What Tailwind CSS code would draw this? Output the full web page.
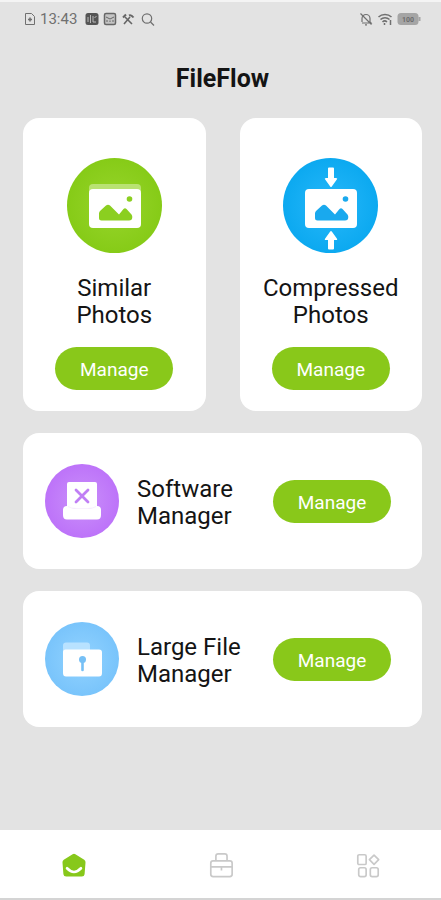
<!DOCTYPE html>
<html lang="en">
<head>
<meta charset="utf-8">
<meta name="viewport" content="width=device-width, initial-scale=1">
<title>FileFlow</title>
<script src="https://cdn.jsdelivr.net/npm/@tailwindcss/browser@4"></script>
</head>
<body class="flex min-h-screen flex-col border-t-2 border-[#f4f4f4] bg-[#e3e3e3] font-[Roboto,sans-serif] text-[#141414]">

<!-- Status bar -->
<div class="flex h-[34px] items-center justify-between pl-6 pr-5 text-[#707070]">
  <div class="flex items-center gap-1">
    <svg class="h-3.5 w-3" viewBox="0 0 12 14" fill="none" stroke="currentColor" stroke-width="1"><path d="M1.500 1.500h6l3 3v8h-9z"/><path d="M6 5.500v4M4 7.500h4" stroke-width="1.600"/></svg>
    <span class="text-[15px] leading-5">13:43</span>
    <svg class="ml-1 h-3.5 w-3.5" viewBox="0 0 14 14"><rect x="0.500" y="1" width="13" height="12" rx="2.500" fill="#555"/><path d="M3 5v5M5.500 3v8M8 4v6h3M9.500 5.500l2-1" stroke="#bbb" fill="none"/></svg>
    <svg class="h-3.5 w-3.5" viewBox="0 0 14 14"><rect x="1.500" y="1.500" width="11" height="11" rx="1.500" fill="#c4c4c4" stroke="#666" stroke-width="1.500"/><path d="M3 5l4 2 4-2M4 10V8m3 2V8.500M10 10V8" stroke="#666" fill="none"/></svg>
    <svg class="h-3.5 w-3.5" viewBox="0 0 14 14" fill="none" stroke="#666"><path d="M3 12l6-7M4 5l7 7" stroke-width="1.600"/><path d="M2 5.500l3-3M8 3.500c2-1 3 0 4.500 2" stroke-width="2"/></svg>
    <svg class="ml-0.5 h-3.5 w-3.5" viewBox="0 0 14 14" fill="none" stroke="currentColor" stroke-width="1.200"><circle cx="6" cy="6.500" r="4.700"/><path d="M9.500 10l3.500 3.500"/></svg>
  </div>
  <div class="flex items-center gap-1">
    <svg class="h-3.5 w-3.5" viewBox="0 0 14 14" fill="none" stroke="currentColor" stroke-width="1.200"><path d="M3 10V6.500a4 4 0 0 1 8 0V10l1 1H3M6 12.800h2M1.500 1.500l11 11"/></svg>
    <svg class="h-3.5 w-4" viewBox="0 0 16 14" fill="none" stroke="currentColor" stroke-width="1.500"><path d="M1.500 5c3.500-3.500 9.500-3.500 13 0M3.500 7.500c2.500-2.500 6.500-2.500 9 0M5.500 10c1.500-1.500 3-1.500 4.500 0"/><path d="M13.500 8v5M7.500 11v2"/></svg>
    <svg class="h-3.5 w-6" viewBox="0 0 24 14"><rect x="0.500" y="1" width="21" height="12" rx="3.500" fill="#a5a5a5"/><path d="M22.500 5v4" stroke="#a5a5a5" stroke-width="2"/><text x="11" y="10" text-anchor="middle" font-size="7" font-weight="700" fill="#6c6c6c">100</text></svg>
  </div>
</div>

<h1 class="mt-[25px] pr-[19px] pl-[23px] text-center text-[25px] leading-9 font-bold">FileFlow</h1>

<main class="mt-[21px] flex grow flex-col gap-[22px] pr-[19px] pl-[23px]">
  <div class="grid grid-cols-2 gap-[34px]">
    <section class="flex flex-col items-center rounded-2xl bg-white pt-10 pb-[21px]">
      <svg class="size-[95px]" viewBox="0 0 95 95">
        <defs><radialGradient id="green"><stop offset="0" stop-color="#98d52c"/><stop offset="1" stop-color="#86cb17"/></radialGradient></defs>
        <circle cx="47.500" cy="47.500" r="47.500" fill="url(#green)"/>
        <path d="M22 34v-4a4 4 0 0 1 4-4h44a4 4 0 0 1 4 4v4z" fill="#b9e273"/>
        <rect x="22" y="31" width="52" height="39" rx="4" fill="#fff"/>
        <path d="M32 55.500q0-1.500 1-2.500l6-5.500q2-1.500 4 0l9 9 4.500-5.500q1.500-1.500 3 0l5 5.500q.8 1 .8 2.500 0 3.500-3.300 3.500H34.500Q32 62.500 32 60z" fill="#8bcf20"/>
        <circle cx="62.500" cy="41" r="2.800" fill="#8bcf20"/>
      </svg>
      <h2 class="mt-[22px] text-center text-2xl leading-[27px]">Similar<br>Photos</h2>
      <button type="button" class="mt-[18px] h-[43px] w-[118px] rounded-full bg-[#89c81a] pt-1 text-[19px] text-white">Manage</button>
    </section>
    <section class="flex flex-col items-center rounded-2xl bg-white pt-10 pb-[21px]">
      <svg class="size-[95px]" viewBox="0 0 95 95">
        <defs><radialGradient id="blue"><stop offset="0" stop-color="#27b8fa"/><stop offset="1" stop-color="#0ca9f0"/></radialGradient></defs>
        <circle cx="47.500" cy="47.500" r="47.500" fill="url(#blue)"/>
        <rect x="22" y="31" width="52" height="39" rx="4" fill="#fff"/>
        <path d="M32 55.500q0-1.500 1-2.500l6-5.500q2-1.500 4 0l9 9 4.500-5.500q1.500-1.500 3 0l5 5.500q.8 1 .8 2.500 0 3.500-3.300 3.500H34.500Q32 62.500 32 60z" fill="#19a9ee"/>
        <circle cx="62.500" cy="41" r="2.800" fill="#19a9ee"/>
        <path d="M46 9.500h4q1 0 1 1V20h2q2 0 .8 1.500l-5 7q-.8 1-1.600 0l-5-7Q41 20 43 20h2v-9.500q0-1 1-1z" fill="#fff"/>
        <path d="M46 91.500h4q1 0 1-1V82h2q2 0 .8-1.500l-5-7q-.8-1-1.600 0l-5 7Q41 82 43 82h2v8.500q0 1 1 1z" fill="#fff"/>
      </svg>
      <h2 class="mt-[22px] text-center text-2xl leading-[27px]">Compressed<br>Photos</h2>
      <button type="button" class="mt-[18px] h-[43px] w-[118px] rounded-full bg-[#89c81a] pt-1 text-[19px] text-white">Manage</button>
    </section>
  </div>

  <section class="flex h-[136px] items-center rounded-2xl bg-white pr-[31px] pl-[22px]">
    <svg class="size-[74px] shrink-0" viewBox="0 0 74 74">
      <defs><radialGradient id="purple"><stop offset="0" stop-color="#ca90fa"/><stop offset="1" stop-color="#bd73f9"/></radialGradient></defs>
      <circle cx="37" cy="37" r="37" fill="url(#purple)"/>
      <path d="M22 44V20q0-2 2-2h26q2 0 2 2v24z" fill="#fff"/>
      <path d="M31 26l12 12M43 26L31 38" stroke="#c07ff5" stroke-width="2.800" stroke-linecap="round"/>
      <path d="M22 42h1q3 2.500 8 2.500h12q5 0 8-2.500h1q4 0 4 4v5q0 4.500-4 4.500H22q-4 0-4-4.500v-5q0-4 4-4z" fill="#fff"/>
      <path d="M23 42.500q3 2 8 2h12q5 0 8-2" fill="none" stroke="#f8f1fe" stroke-width="1"/>
    </svg>
    <h2 class="ml-[18px] grow pt-1 text-2xl leading-[27px]">Software<br>Manager</h2>
    <button type="button" class="h-[43px] w-[118px] shrink-0 rounded-full bg-[#89c81a] pt-1 text-[19px] text-white">Manage</button>
  </section>

  <section class="flex h-[136px] items-center rounded-2xl bg-white pr-[31px] pl-[22px]">
    <svg class="size-[74px] shrink-0" viewBox="0 0 74 74">
      <defs><radialGradient id="sky"><stop offset="0" stop-color="#92d3ff"/><stop offset="1" stop-color="#79c4fb"/></radialGradient></defs>
      <circle cx="37" cy="37" r="37" fill="url(#sky)"/>
      <path d="M18 34V23.500q0-3 3-3h21q3 0 3 3V34z" fill="#b8e2ff"/>
      <path d="M18 30q0-2.500 2.500-2.500H54q3 0 3 3V51q0 3.500-3 3.500H21q-3 0-3-3.500z" fill="#fff"/>
      <circle cx="37.500" cy="37.500" r="3.500" fill="#76c0f6"/>
      <path d="M37.500 38v10" stroke="#76c0f6" stroke-width="2.600" stroke-linecap="round"/>
    </svg>
    <h2 class="ml-[18px] grow pt-1 text-2xl leading-[27px]">Large File<br>Manager</h2>
    <button type="button" class="h-[43px] w-[118px] shrink-0 rounded-full bg-[#89c81a] pt-1 text-[19px] text-white">Manage</button>
  </section>
</main>

<nav class="grid h-[70px] grid-cols-3 border-b-2 border-[#d4d4d4] bg-white text-[#c9c9c9]" aria-label="Main">
  <a href="#home" aria-label="Home" class="flex items-center justify-center pt-0.5">
    <svg class="size-[26px]" viewBox="0 0 28 28"><path d="M12.500 2.400q1.500-1 3 0l9.500 6q1.600 1 1.400 3L25.400 24q-.3 2.500-3 2.500H5.600q-2.700 0-3-2.500l-1-12.600Q1.400 9.400 3 8.400z" fill="#87c81b"/><path d="M6.500 17.500q7.500 8 15 0" fill="none" stroke="#fff" stroke-width="2.800" stroke-linecap="round"/></svg>
  </a>
  <a href="#tools" aria-label="Tools" class="flex items-center justify-center pt-0.5">
    <svg class="size-[26px]" viewBox="0 0 28 28" fill="none" stroke="currentColor" stroke-width="1.800"><rect x="3" y="9.500" width="23" height="17" rx="2.500"/><path d="M8.500 9.500V4.500q0-2.500 2.500-2.500h7q2.500 0 2.500 2.500v5M3 16h23M14.500 16v4"/></svg>
  </a>
  <a href="#more" aria-label="More" class="flex items-center justify-center pt-0.5">
    <svg class="size-[26px]" viewBox="0 0 28 28" fill="none" stroke="currentColor" stroke-width="1.800"><rect x="3" y="3" width="9" height="10.500" rx="1.500"/><path d="M20.500 3.300l5 5-5 5-5-5z" stroke-linejoin="round"/><rect x="4" y="17" width="8" height="9.500" rx="2"/><rect x="16.500" y="17" width="8.500" height="9.500" rx="2"/></svg>
  </a>
</nav>
</body>
</html>
